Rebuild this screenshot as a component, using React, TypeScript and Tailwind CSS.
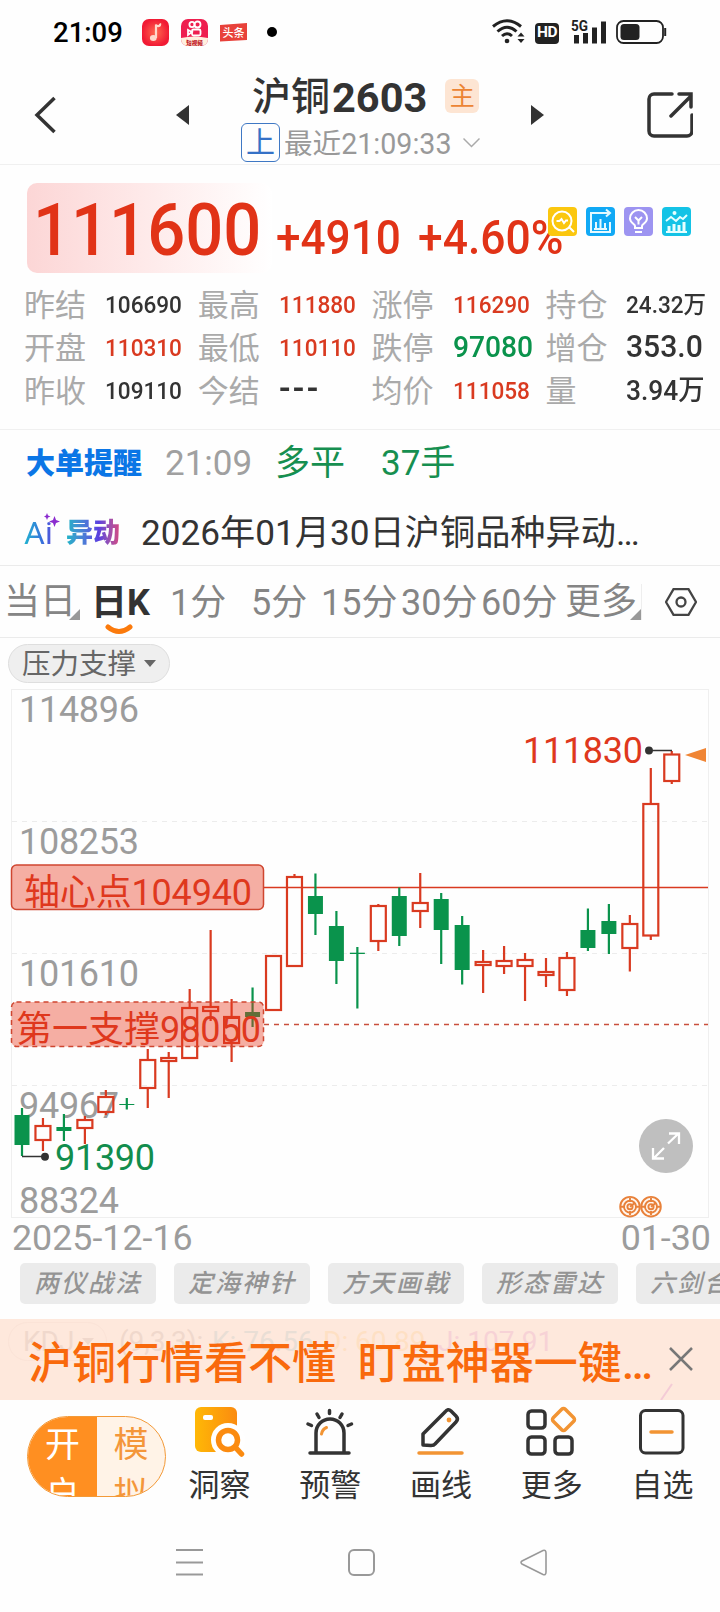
import React from "react";

type Candle = [number, number, number, number, "r" | "g"];

/* wick top, body top, body bottom, wick bottom, direction */
const candles: Candle[] = [
  [1108, 1115, 1145, 1156, "g"],
  [1118, 1126, 1140, 1151, "r"],
  [1114, 1127, 1131, 1141, "g"],
  [1116, 1120, 1128, 1144, "r"],
  [1090, 1097, 1112, 1115, "r"],
  [1098, 1104, 1105, 1109.5, "g"],
  [1049, 1060, 1088, 1108, "r"],
  [1052, 1058, 1061, 1098, "r"],
  [989, 1008, 1058, 1058, "r"],
  [930, 1007, 1011, 1021, "r"],
  [999, 1017, 1043, 1062, "r"],
  [987.5, 1012, 1017, 1027, "g"],
  [955, 956, 1010, 1010, "r"],
  [874, 877, 966, 966, "r"],
  [873.5, 896, 914, 935, "g"],
  [911, 926, 961, 984, "g"],
  [947, 952.7, 954, 1008.5, "g"],
  [904, 906, 941, 951, "r"],
  [887.5, 896, 936, 946, "g"],
  [873, 903, 911, 928, "r"],
  [893, 899, 930, 964, "g"],
  [916, 925, 970, 984.5, "g"],
  [950, 962, 965, 993, "r"],
  [946, 961, 966, 974, "r"],
  [953, 960, 966, 1001, "r"],
  [958, 972, 975, 987, "r"],
  [952, 958, 990, 996, "r"],
  [908.5, 930, 948, 951, "g"],
  [904, 921, 934, 954, "g"],
  [915, 924, 948, 971.5, "r"],
  [768, 804, 935.5, 940, "r"],
  [751, 754.5, 781, 784, "r"],
];

const RED = "#d93a20";
const GREEN = "#0a934c";

function StatusBar() {
  return (
    <div className="flex h-16 items-center pl-[53px] pr-[52px]">
      <span className="mt-[2px] w-[89px] text-[27.5px] leading-8 font-medium text-black">
        <span className="inline-block origin-left">21:09</span>
      </span>
      <svg className="h-7 w-[27px]" viewBox="0 0 27 28">
        <defs>
          <radialGradient id="music"><stop offset="0" stopColor="#ff6a50" /><stop offset="1" stopColor="#f11a34" /></radialGradient>
        </defs>
        <rect y="1" width="27" height="27" rx="7" fill="url(#music)" />
        <path d="M14 20V6.500c1 3 5 1.500 4 -1" fill="none" stroke="#ffd9cc" strokeWidth="2.200" />
        <ellipse cx="11.300" cy="20" rx="3.400" ry="3" fill="#ffd9cc" />
      </svg>
      <svg className="ml-3 h-7 w-[27px]" viewBox="0 0 27 28">
        <rect y="1" width="27" height="27" rx="7" fill="#ee1f4f" />
        <path d="M0 20q13 -3 27 0v1a7 7 0 0 1 -7 7H7a7 7 0 0 1 -7 -7z" fill="#fff0df" />
        <g fill="none" stroke="#fff" strokeWidth="1.800">
          <circle cx="11" cy="6.500" r="2.600" /><circle cx="16.500" cy="6.500" r="3" />
          <rect x="11" y="11.500" width="8.500" height="6" rx="1.500" /><path d="M11 14l-4 -2v5z" />
        </g>
        <text x="13.500" y="26.500" fontSize="5.500" fontWeight="900" textAnchor="middle" fill="#c2232b">短视频</text>
      </svg>
      <svg className="ml-3 h-7 w-[27px]" viewBox="0 0 27 28">
        <path d="M0 7L27 5V22L0 23.500z" fill="#e8413a" />
        <text x="13.500" y="18.500" fontSize="11" fontWeight="500" textAnchor="middle" fill="#fff">头条</text>
      </svg>
      <span className="ml-5 size-[10px] rounded-full bg-black" />
      <div className="ml-auto flex items-center">
        <svg className="h-7 w-[33px]" viewBox="0 0 33 28" fill="none" stroke="#222" strokeWidth="3">
          <path d="M1 8.500Q15 -3 29 8.500M5.500 13.500Q15 5 24.500 13.500M10 18Q15 13.500 20 18" />
          <circle cx="15" cy="23" r="2.300" fill="#222" stroke="none" />
          <path d="M25.500 18.500l3.500 -4l3.500 4zM25.500 21l3.500 4l3.500 -4z" fill="#222" stroke="none" />
        </svg>
        <span className="mt-[2px] ml-[10px] flex h-[21px] w-6 items-center justify-center rounded-[4px] bg-[#222] text-[15.5px] font-bold tracking-[-0.5px] text-white">HD</span>
        <svg className="ml-3 h-7 w-9" viewBox="0 0 36 28">
          <path d="M3 17h5v8.500H3zM12 15h5v10.500h-5zM21 9.500h5v16h-5zM30 3.500h5v22h-5z" fill="#222" />
          <text x="0" y="12.500" fontSize="14.500" fontWeight="700" fill="#222" textLength="17" lengthAdjust="spacingAndGlyphs">5G</text>
        </svg>
        <svg className="ml-[9px] h-6 w-[52px]" viewBox="0 0 52 24">
          <rect x="1" y="1" width="46" height="22" rx="6.500" fill="none" stroke="#222" strokeWidth="1.800" />
          <rect x="4.500" y="4" width="19" height="16" rx="3.500" fill="#222" />
          <path d="M49.200 8v8" stroke="#222" strokeWidth="2" />
        </svg>
      </div>
    </div>
  );
}

function Header() {
  return (
    <header className="flex h-[101px] items-start border-b border-[#f0f0f0] pl-[34px] pr-[27px]">
      <svg className="mt-8 h-[38px] w-[22px]" viewBox="0 0 22 38" fill="none" stroke="#333" strokeWidth="3.500">
        <path d="M20.500 2L3 19L20.500 36" />
      </svg>
      <svg className="mt-[41px] ml-[120px] h-5 w-[13px]" viewBox="0 0 13 20"><path d="M13 0v20L0 10z" fill="#333" /></svg>
      <div className="ml-[52px] w-[290px]">
        <div className="mt-[10px] flex h-[46px] items-center pl-[11px]">
          <span className="text-[39px] leading-[46px] font-medium text-[#333]">沪铜</span>
          <span className="mt-[2px] ml-[2px] text-[41.5px] leading-[46px] font-bold text-[#333]">2603</span>
          <span className="ml-[18px] mb-[2px] flex size-[34px] items-center justify-center rounded-[6px] bg-[#fde5d3] pt-[2px] text-[25px] leading-8 text-[#ec8434]">主</span>
        </div>
        <div className="mt-[3px] flex h-[39px] items-center">
          <span className="flex size-[39px] items-center justify-center rounded-[6px] border border-[#3f78c4] text-[29px] leading-9 text-[#3571c6]">上</span>
          <span className="mt-[3px] ml-1 text-[28.6px] leading-[34px] text-[#999]">最近21:09:33</span>
          <svg className="ml-3 h-3 w-[17px]" viewBox="0 0 17 12" fill="none" stroke="#aaa" strokeWidth="1.500"><path d="M.5 1.500l8 8l8 -8" /></svg>
        </div>
      </div>
      <svg className="mt-[41px] h-5 w-[13px]" viewBox="0 0 13 20"><path d="M0 0v20L13 10z" fill="#333" /></svg>
      <svg className="mt-[27px] ml-auto h-[47px] w-[46px]" viewBox="0 0 46 47" fill="none" stroke="#333" strokeWidth="3.500">
        <path d="M25 3H7a5 5 0 0 0 -5 5v32a5 5 0 0 0 5 5h33a5 5 0 0 0 5 -5V24M32 3H44V16M24 25L44 5" strokeLinecap="round" />
      </svg>
    </header>
  );
}

const quotes: { label: string; value: string; cls: string }[][] = [
  [
    { label: "昨结", value: "106690", cls: "text-2xl text-[#333]" },
    { label: "最高", value: "111880", cls: "text-2xl text-[#d93a20]" },
    { label: "涨停", value: "116290", cls: "text-2xl text-[#d93a20]" },
    { label: "持仓", value: "24.32万", cls: "text-2xl text-[#333]" },
  ],
  [
    { label: "开盘", value: "110310", cls: "text-2xl text-[#d93a20]" },
    { label: "最低", value: "110110", cls: "text-2xl text-[#d93a20]" },
    { label: "跌停", value: "97080", cls: "text-[30px] text-[#0a934c]" },
    { label: "增仓", value: "353.0", cls: "text-[32px] text-[#333]" },
  ],
  [
    { label: "昨收", value: "109110", cls: "text-2xl text-[#333]" },
    { label: "今结", value: "---", cls: "text-[36px] tracking-[2.5px] text-[#333]" },
    { label: "均价", value: "111058", cls: "text-2xl text-[#d93a20]" },
    { label: "量", value: "3.94万", cls: "text-[28px] text-[#333]" },
  ],
];

function Tools() {
  return (
    <div className="absolute top-[24px] left-[548px] flex gap-[9px]">
      <svg className="size-[29px]" viewBox="0 0 29 29" fill="none" stroke="#fff" strokeWidth="2">
        <rect width="29" height="29" rx="4" fill="#fbc70f" stroke="none" />
        <circle cx="14" cy="14" r="9.500" /><path d="M21 20l5 5M8.500 14h3l2 -2l2.500 4l2 -2.500h2" />
      </svg>
      <svg className="size-[29px]" viewBox="0 0 29 29" fill="none" stroke="#e6faff" strokeWidth="2">
        <rect width="29" height="29" rx="4" fill="#11a9f5" stroke="none" />
        <path d="M15 6H5v19h19V15M14 6h9M20 2.500l4 3.500l-4 3.500M10 21v-6M14.500 21v-9M19 21v-5M8 22h13" />
      </svg>
      <svg className="size-[29px]" viewBox="0 0 29 29" fill="none" stroke="#fff" strokeWidth="2">
        <rect width="29" height="29" rx="4" fill="#9d94f1" stroke="none" />
        <path d="M11 21v-2c0 -2 -5 -3 -5 -7.500a8.500 8.500 0 0 1 17 0c0 4.500 -5 5.500 -5 7.500v2zM11 25h7M11 10l3.500 3.500l3.500 -3.500M14.500 13.500v4" />
      </svg>
      <svg className="size-[29px]" viewBox="0 0 29 29" fill="none" stroke="#e6ffff" strokeWidth="2">
        <rect width="29" height="29" rx="4" fill="#14c3e6" stroke="none" />
        <path d="M4 25h21" /><path d="M7 24v-5M12 24v-7M17 24v-6M22 24v-9" strokeWidth="3" /><path d="M4 14l5 -4l5 4l4 -4l3 2l4 -4" /><circle cx="12.500" cy="6" r="1" />
      </svg>
    </div>
  );
}

function Quote() {
  return (
    <section className="h-[265px] border-b border-[#f0f0f0] pt-[18px]">
      <div className="relative flex h-[90px] text-[#e13317]">
        <div className="ml-[27px] flex w-[245px] items-center rounded-[10px] bg-gradient-to-r from-[#fcd6d6] to-white pl-[6px]">
          <span className="mt-[3px] inline-block origin-left scale-x-[0.917] text-[73px] leading-[90px] font-medium">111600</span>
        </div>
        <span className="mt-[27px] ml-1 w-[142px] text-[48px] leading-[56px] font-medium"><span className="inline-block origin-left scale-x-[0.92]">+4910</span></span>
        <span className="mt-[27px] text-[48px] leading-[56px] font-medium"><span className="inline-block origin-left scale-x-[0.925]">+4.60%</span></span>
        <Tools />
      </div>
      <div className="mt-[11px] ml-6">
        {quotes.map((row, i) => (
          <div key={i} className="flex h-[43px] items-center">
            {row.map((q) => (
              <div key={q.label} className="flex w-[173.8px] shrink-0 items-center">
                <span className="w-[81px] shrink-0 text-[31px] leading-[43px] text-[#aaa]">{q.label}</span>
                <span className="mt-[1px] shrink-0 leading-[43px]">
                  <span className={"inline-block origin-left scale-x-[0.94] leading-[43px] font-medium whitespace-nowrap " + q.cls}>{q.value}</span>
                </span>
              </div>
            ))}
          </div>
        ))}
      </div>
    </section>
  );
}

function Alerts() {
  return (
    <section className="h-[136px] border-b border-[#ebebeb]">
      <div className="flex h-[68px] items-center">
        <span className="ml-[26px] w-[139px] text-[29px] leading-9 font-black text-[#0b76e6]">大单提醒</span>
        <span className="w-[110px] text-[35px] leading-10 text-[#a0a0a0]">21:09</span>
        <span className="w-[106px] text-[35px] leading-10 text-[#168f50]">多平</span>
        <span className="text-[35px] leading-10 text-[#168f50]">37手</span>
      </div>
      <div className="flex h-[70px] items-center">
        <span className="relative ml-6 w-[42px] bg-gradient-to-r from-[#1fb4cf] via-[#3a63dc] to-[#7a35d8] bg-clip-text text-[32px] leading-9 text-transparent">
          Ai
          <svg className="absolute -top-[3px] left-5 size-4" viewBox="0 0 16 16"><path d="M3 1l1 2.500l2.500 1l-2.500 1l-1 2.500l-1 -2.500l-2 -1l2 -1zM10.500 4l1.500 4l4 1.500l-4 1.500l-1.500 4l-1.500 -4l-4 -1.500l4 -1.500z" fill="#8b2ccf" /></svg>
        </span>
        <span className="w-[75px] text-[27px] leading-9 font-black"><span className="bg-gradient-to-r from-[#16b5c6] via-[#5a3fe0] via-60% to-[#d8447e] bg-clip-text text-transparent">异动</span></span>
        <span className="text-[35.2px] leading-10 whitespace-nowrap text-[#333]">2026年01月30日沪铜品种异动…</span>
      </div>
    </section>
  );
}

function Corner() {
  return <svg className="absolute right-0 bottom-0 size-[11px]" viewBox="0 0 11 11"><path d="M11 0v11H0z" fill="#999" /></svg>;
}

function Tabs() {
  const base = "shrink-0 whitespace-nowrap";
  return (
    <nav className="flex h-[72px] items-center border-b border-[#ebebeb] pt-[3px] pl-1 text-[36px] leading-[42px] text-[#858585]">
      <span className={base + " relative -top-px w-[76px] leading-[36px]"}>当日<Corner /></span>
      <span className={base + " relative ml-[11px] w-[79px] font-bold text-[#333]"}>
        日K
        <svg className="absolute top-[42px] left-[14px] h-3 w-7" viewBox="0 0 28 12" fill="none" stroke="#fb7a0c" strokeWidth="5" strokeLinecap="round"><path d="M3 3Q14 12 25 3" /></svg>
      </span>
      <span className={base + " w-[81px]"}>1分</span>
      <span className={base + " w-[70px]"}>5分</span>
      <span className={base + " w-20"}>15分</span>
      <span className={base + " w-20"}>30分</span>
      <span className={base + " w-[84px]"}>60分</span>
      <span className={base + " relative -top-px w-[77px] border-r border-[#eee] leading-[36px]"}>更多<Corner /></span>
      <svg className="mb-[2px] ml-[23px] h-7 w-8" viewBox="0 0 32 28" fill="none" stroke="#444" strokeWidth="2.300">
        <path d="M8.500 1.200h15L31 14l-7.500 12.800h-15L1 14z" /><circle cx="16" cy="14" r="4.500" />
      </svg>
    </nav>
  );
}

function Target({ x }: { x: number }) {
  return (
    <g fill="none" stroke="#e8813a" strokeWidth="1.900">
      <circle cx={x} cy="1206.700" r="9.800" fill="#fff6ee" />
      <circle cx={x} cy="1206.700" r="6" /><circle cx={x} cy="1206.700" r="2.600" />
      <path d={`M${x} 1198v4M${x} 1211v4M${x - 9} 1206.700h4M${x + 5} 1206.700h4M${x} 1206.700l5 -4`} />
    </g>
  );
}

function Chart() {
  return (
    <svg className="block h-[530px] w-[720px]" viewBox="0 688 720 530">
      <rect x="11.500" y="689.500" width="697" height="528" fill="none" stroke="#efefef" />
      {[821.5, 953.5, 1085.5].map((y) => (
        <path key={y} d={`M12 ${y}H708`} stroke="#ececec" strokeDasharray="5 5" />
      ))}
      <g fontSize="36" fill="#9c9c9c">
        <text x="19" y="722" textLength="120">114896</text>
        <text x="19" y="854" textLength="120">108253</text>
        <text x="19" y="986" textLength="120">101610</text>
        <text x="19" y="1118" textLength="100">94967</text>
        <text x="19" y="1213" textLength="100">88324</text>
      </g>
      <path d="M264 887.500H708" stroke={RED} strokeWidth="1.500" />
      <path d="M264 1024.500H708" stroke="#c94f3c" strokeWidth="1.500" strokeDasharray="5 5" />
      {candles.map(([wt, bt, bb, wb, d], i) => {
        const x = 22 + i * 20.96;
        return d === "r" ? (
          <g key={i} stroke={RED} strokeWidth="2.200" fill="none">
            <path d={`M${x} ${wt}V${bt}M${x} ${bb}V${wb}`} />
            <rect x={x - 7.5} y={bt} width="15" height={bb - bt} />
          </g>
        ) : (
          <g key={i} fill={GREEN}>
            <rect x={x - 1.1} y={wt} width="2.200" height={wb - wt} />
            <rect x={x - 7.5} y={bt} width="15" height={bb - bt} />
          </g>
        );
      })}
      <rect x="11.500" y="865" width="252" height="44.500" rx="5" fill="#e8361c" fillOpacity="0.400" stroke="#cf4630" strokeWidth="1.500" />
      <rect x="11.500" y="1002" width="252" height="44.500" rx="5" fill="#e8361c" fillOpacity="0.400" stroke="#cf4630" strokeWidth="1.500" strokeDasharray="5 4" />
      <g fontSize="36" fill="#df381d">
        <text x="24" y="904.500" textLength="228">轴心点104940</text>
        <text x="16" y="1041.500" textLength="245">第一支撑98050</text>
        <text x="523" y="763" textLength="120">111830</text>
      </g>
      <text x="55" y="1170" fontSize="36" textLength="100" fill="#128d4d">91390</text>
      <g stroke="#333" strokeWidth="1.500" fill="none">
        <path d="M22 1156.500H45M649 750.500H672" />
        <circle cx="45" cy="1156.700" r="3.200" fill="#333" /><circle cx="649" cy="750.500" r="3.200" fill="#333" />
      </g>
      <path d="M685 755L706 748V762z" fill="#f08535" />
      <circle cx="666" cy="1146" r="27" fill="#bfbfbf" />
      <path d="M668 1143.500L679 1133M669 1133.500H679V1144M664 1148L653 1159M653 1148V1158.500H664" fill="none" stroke="#fff" strokeWidth="2.300" />
      <Target x={630} /><Target x={651} />
    </svg>
  );
}

function Banner() {
  return (
    <section className="relative h-[81px] overflow-hidden bg-[#fee8dc]">
      <div className="absolute top-[3px] left-2 flex h-[39px] items-center text-[28px] leading-9 whitespace-nowrap">
        <span className="flex h-[39px] w-[99px] items-center rounded-full border border-[#fbe3d7] pl-[14px] text-[#f0d8cc]">KDJ<span className="ml-2 border-x-[6px] border-t-[7px] border-x-transparent border-t-[#f0d8cc]" /></span>
        <span className="ml-3 w-[93px] text-[#f0d8cc]">(9,3,3):</span>
        <span className="w-[111px] text-[#e9ded5]">K: 76.56</span>
        <span className="w-[115px] text-[#fee0c4]">D: 60.89</span>
        <span className="text-[#f7d2d6]">J: 107.91</span>
      </div>
      <svg className="absolute top-[64px] left-[660px] h-[17px] w-[13px]" viewBox="0 0 13 17"><path d="M1 17L12 1" stroke="#f4cbd6" strokeWidth="2" /></svg>
      <div className="relative flex h-[90px] items-center pl-7">
        <span className="w-[641px] text-[44px] leading-[52px] font-medium whitespace-pre text-[#f9690c]">{"沪铜行情看不懂  盯盘神器一键…"}</span>
        <svg className="mb-[10px] size-6" viewBox="0 0 24 24" fill="none" stroke="#777" strokeWidth="2.500"><path d="M1 1L23 23M23 1L1 23" /></svg>
      </div>
    </section>
  );
}

function Item({ label, children }: { label: string; children: React.ReactNode }) {
  return (
    <div className="flex w-[110.8px] shrink-0 flex-col items-center">
      <svg className="h-[52px] w-[52px]" viewBox="0 0 52 52" fill="none" stroke="#333" strokeWidth="3.500" strokeLinecap="round" strokeLinejoin="round">{children}</svg>
      <span className="mt-2 text-[31px] leading-10 text-[#333]">{label}</span>
    </div>
  );
}

function BottomBar() {
  return (
    <footer className="flex h-[130px] pt-[6px] pl-[27px]">
      <div className="mt-[10px] flex h-[81px] w-[139px] shrink-0 overflow-hidden rounded-full border border-[#f39a38] bg-[#fff3e7] text-center text-[35px] leading-[50px]">
        <div className="w-[69px] bg-[#ff8f21] px-[15px] pt-1 text-white">开户</div>
        <div className="flex-1 px-4 pt-1 text-[#f4963a]">模拟</div>
      </div>
      <div className="-ml-[2px] flex">
        <Item label="洞察">
          <defs><linearGradient id="gold"><stop offset="0" stopColor="#ffb806" /><stop offset="1" stopColor="#fb8b10" /></linearGradient></defs>
          <rect x="2" y="1" width="42" height="45" rx="6" fill="url(#gold)" stroke="none" />
          <rect x="10" y="9" width="10" height="5" rx="2" fill="#fff" stroke="none" />
          <circle cx="35" cy="34" r="13" fill="#fff" stroke="#fff" strokeWidth="8" />
          <circle cx="35" cy="34" r="9.500" stroke="#fb8b10" strokeWidth="5.500" fill="#fff" />
          <path d="M43 42L48.500 48" stroke="#fb8b10" strokeWidth="5.500" />
        </Item>
        <Item label="预警">
          <path d="M6 47H45M12 46V27a14 14 0 0 1 28 0V46M25.500 4.500v3M13 8l2 3.500M38 8l-2 3.500M4 18l3.500 1.500M47.500 18l-3.500 1.500" />
          <path d="M17.500 28q1 -5 5 -6.500" stroke="#f29433" strokeWidth="3" />
        </Item>
        <Item label="画线">
          <path d="M8 39V28L30 6Q33 2 36 5L41 10Q44 13 41 16L20 38Q19 39.500 16 39.500z" />
          <circle cx="34" cy="14" r="2.400" fill="#f29433" stroke="none" /><path d="M4 47H47" stroke="#f29433" />
        </Item>
        <Item label="更多">
          <rect x="2" y="5" width="17" height="17" rx="3.500" /><rect x="2" y="31" width="17" height="17" rx="3.500" /><rect x="29" y="31" width="17" height="17" rx="3.500" />
          <rect x="29" y="5" width="17" height="17" rx="2.500" transform="rotate(45 37.500 13.500)" stroke="#f29433" />
        </Item>
        <Item label="自选">
          <rect x="3.500" y="4.500" width="42.500" height="42.500" rx="5" strokeWidth="3" /><path d="M14 26H35" stroke="#f29433" />
        </Item>
      </div>
    </footer>
  );
}

export default function App() {
  return (
    <main className="h-[1612px] w-[720px] overflow-hidden bg-[#fefefe] [font-family:Roboto,'Noto_Sans_CJK_SC',sans-serif]">
      <StatusBar />
      <Header />
      <Quote />
      <Alerts />
      <Tabs />
      <div className="flex h-[50px] items-start pt-[6px] pl-2">
        <div className="flex h-[39px] w-[162px] items-center rounded-full border border-[#dedede] bg-[#efefef] pl-[13px] text-[28.5px] leading-9 text-[#666]">
          <span className="mt-[3px]">压力支撑</span>
          <svg className="ml-2 h-[7px] w-3" viewBox="0 0 12 7"><path d="M0 0H12L6 7z" fill="#666" /></svg>
        </div>
      </div>
      <Chart />
      <div className="flex h-[45px] justify-between pr-[9px] pl-3 text-[35.8px] leading-[40px] text-[#9c9c9c]">
        <span>2025-12-16</span>
        <span>01-30</span>
      </div>
      <div className="flex h-14 gap-[18px] overflow-hidden pl-5">
        {["两仪战法", "定海神针", "方天画戟", "形态雷达", "六剑合璧"].map((t) => (
          <span key={t} className="h-[41px] w-[136px] shrink-0 rounded-[5px] bg-[#ebebeb] text-center text-[25px] leading-[42px] font-medium tracking-[2px] text-[#949494] italic">{t}</span>
        ))}
      </div>
      <Banner />
      <BottomBar />
      <div className="flex pt-[18px] pl-[175px]">
        <svg className="h-[30px] w-[374px]" viewBox="0 0 374 30" fill="none" stroke="#999" strokeWidth="2">
          <path d="M1 2H28M1 14.500H28M1 26.500H28" />
          <rect x="174" y="2" width="25" height="25" rx="5" />
          <path d="M347 13L368 2.500Q371 1.500 371 5V24Q371 27.500 368 26.500L347 16Q345 14.500 347 13z" strokeWidth="1.600" />
        </svg>
      </div>
    </main>
  );
}
